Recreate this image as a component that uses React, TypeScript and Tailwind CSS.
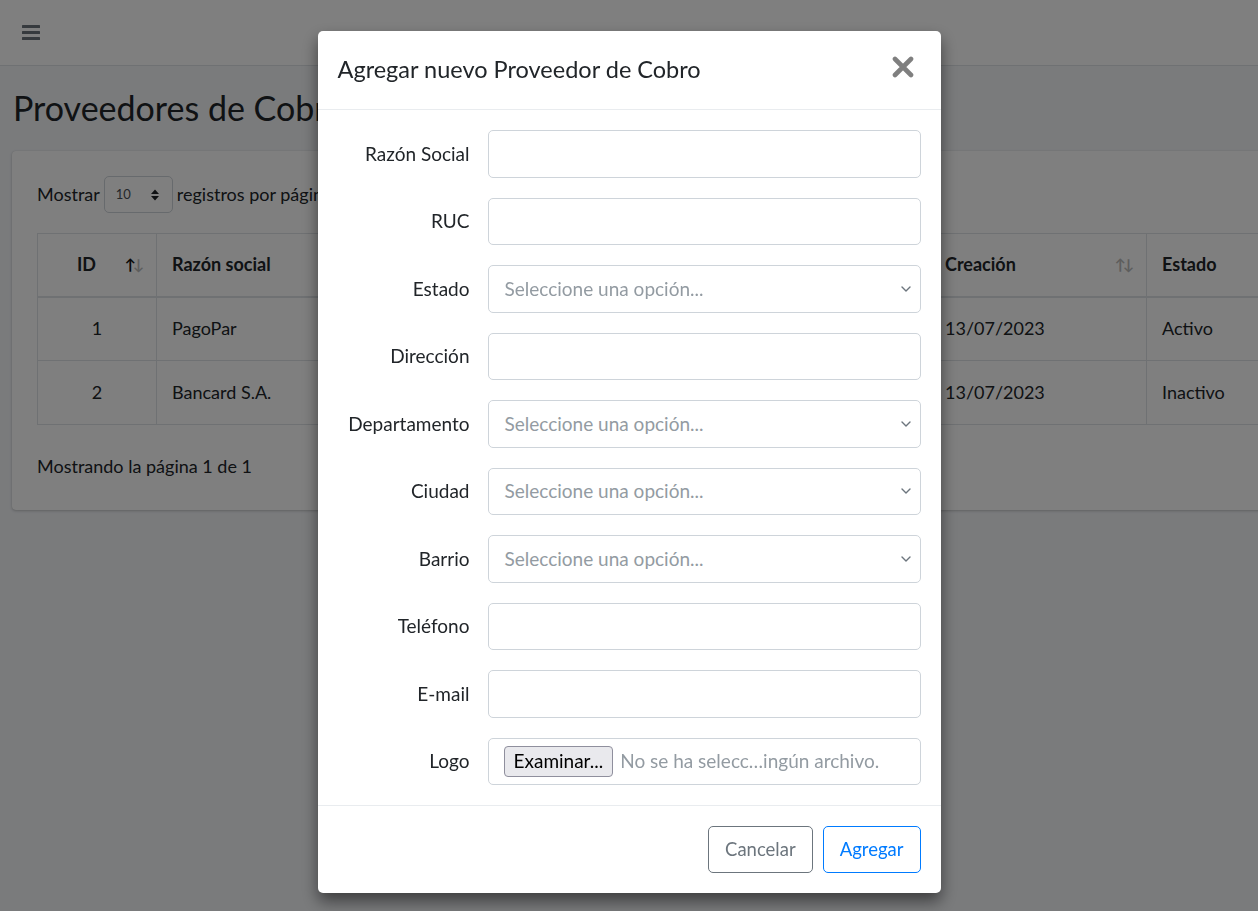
import React from "react";

const font = { fontFamily: "Lato, 'Noto Sans', sans-serif" };

type Field = { label: string; kind: "text" | "select" | "file" };

const fields: Field[] = [
  { label: "Razón Social", kind: "text" },
  { label: "RUC", kind: "text" },
  { label: "Estado", kind: "select" },
  { label: "Dirección", kind: "text" },
  { label: "Departamento", kind: "select" },
  { label: "Ciudad", kind: "select" },
  { label: "Barrio", kind: "select" },
  { label: "Teléfono", kind: "text" },
  { label: "E-mail", kind: "text" },
  { label: "Logo", kind: "file" },
];

const rows = [
  { id: 1, name: "PagoPar", date: "13/07/2023", status: "Activo" },
  { id: 2, name: "Bancard S.A.", date: "13/07/2023", status: "Inactivo" },
];

function Chevron() {
  return (
    <svg width="12" height="8" viewBox="0 0 12 8" className="absolute right-[8px] top-1/2 -translate-y-1/2">
      <path d="M2 2l4 4 4-4" fill="none" stroke="#6c757d" strokeWidth="1.4" strokeLinecap="round" strokeLinejoin="round" />
    </svg>
  );
}

function Control({ kind }: { kind: Field["kind"] }) {
  const base =
    "relative h-[47.5px] w-full rounded-[5px] border border-[#ced4da] bg-white flex items-center";
  if (kind === "select") {
    return (
      <div className={base}>
        <span className="pl-4 text-[19px] text-[#939ba2]">Seleccione una opción...</span>
        <Chevron />
      </div>
    );
  }
  if (kind === "file") {
    return (
      <div className={base + " pl-[15px]"}>
        <span className="h-[31px] px-[9px] flex items-center rounded-[4px] border border-[#8f8f9d] bg-[#e9e9ed] text-[19px] text-black">
          Examinar...
        </span>
        <span className="ml-[7px] text-[19px] text-[#939ba2]">No se ha selecc…ingún archivo.</span>
      </div>
    );
  }
  return <div className={base} />;
}

function SortIcon({ active }: { active?: boolean }) {
  return (
    <span className="text-[15px] font-bold tracking-[-3px] leading-none">
      <span className={active ? "text-[#111]" : "text-[#bbb]"}>↑</span>
      <span className="text-[#bbb]">↓</span>
    </span>
  );
}

function Page() {
  return (
    <div className="min-h-screen bg-[#f4f6f9]">
      <div className="h-[66px] bg-white border-b border-[#dee2e6] flex items-center pl-[22px]">
        <svg width="18" height="15" viewBox="0 0 18 15">
          <rect x="0" y="0" width="18" height="3" rx="0.5" fill="#6c757d" />
          <rect x="0" y="6" width="18" height="3" rx="0.5" fill="#6c757d" />
          <rect x="0" y="12" width="18" height="3" rx="0.5" fill="#6c757d" />
        </svg>
      </div>
      <h1 className="pl-[13px] pt-[18px] pb-[20px] text-[34px] leading-[47px] text-[#212529]">
        Proveedores de Cobro
      </h1>
      <div className="ml-[12px] w-[1400px] rounded-[4px] bg-white shadow-[0_0_1px_rgba(0,0,0,.125),0_1px_3px_rgba(0,0,0,.2)] px-[25px] pt-[25px] pb-[30px] text-[18px] text-[#212529]">
        <div className="flex items-center h-[37px]">
          <span>Mostrar</span>
          <span className="mx-[4px] w-[69px] h-[37px] rounded-[5px] border border-[#ced4da] flex items-center justify-between pl-[11px] pr-[12px] text-[13px] text-[#495057]">
            10
            <svg width="10" height="14" viewBox="0 0 10 14">
              <path d="M1 6L5 1.5 9 6z M1 8l4 4.5L9 8z" fill="#212529" />
            </svg>
          </span>
          <span>registros por página</span>
        </div>
        <table className="mt-[20px] border-collapse table-fixed w-[1350px]">
          <colgroup>
            <col className="w-[119px]" />
            <col className="w-[250px]" />
            <col className="w-[200px]" />
            <col className="w-[324px]" />
            <col className="w-[216px]" />
            <col />
          </colgroup>
          <thead>
            <tr className="h-[63px] font-bold">
              <th className="border border-[#dee2e6] border-b-2 px-[15px]">
                <div className="flex items-center justify-between pl-[24px]">
                  <span>ID</span>
                  <SortIcon active />
                </div>
              </th>
              <th className="border border-[#dee2e6] border-b-2 px-[15px] text-left">Razón social</th>
              <th className="border border-[#dee2e6] border-b-2 px-[15px] text-left">RUC</th>
              <th className="border border-[#dee2e6] border-b-2 px-[15px] text-left">Teléfono</th>
              <th className="border border-[#dee2e6] border-b-2 px-[15px] text-left">
                <div className="flex items-center justify-between -ml-[1px]">
                  <span>Creación</span>
                  <SortIcon />
                </div>
              </th>
              <th className="border border-[#dee2e6] border-b-2 px-[15px] text-left">Estado</th>
            </tr>
          </thead>
          <tbody>
            {rows.map((r) => (
              <tr key={r.id} className="h-[64px]">
                <td className="border border-[#dee2e6] text-center">{r.id}</td>
                <td className="border border-[#dee2e6] px-[15px]">{r.name}</td>
                <td className="border border-[#dee2e6] px-[15px]">80000000-1</td>
                <td className="border border-[#dee2e6] px-[15px]">021 000 000</td>
                <td className="border border-[#dee2e6] px-[14px]">{r.date}</td>
                <td className="border border-[#dee2e6] px-[15px]">{r.status}</td>
              </tr>
            ))}
          </tbody>
        </table>
        <div className="mt-[28px] leading-[27px]">Mostrando la página 1 de 1</div>
      </div>
    </div>
  );
}

function Modal() {
  return (
    <div className="fixed inset-0 bg-black/50">
      <div className="mx-auto mt-[31px] w-[623px] rounded-[5px] bg-white shadow-[0_8px_16px_rgba(0,0,0,0.5)]">
        <div className="h-[79px] flex items-center justify-between px-5 border-b border-[#e9ecef]">
          <h4 className="text-[23.5px] text-[#212529]">Agregar nuevo Proveedor de Cobro</h4>
          <svg width="22" height="22" viewBox="0 0 22 22" className="mr-[7px] -mt-[6px]">
            <path d="M3 3l16 16M19 3L3 19" stroke="#7f7f7f" strokeWidth="4.6" strokeLinecap="round" />
          </svg>
        </div>
        <div className="p-5 grid grid-cols-[132px_1fr] gap-x-[18px] gap-y-[20px]">
          {fields.map((f) => (
            <React.Fragment key={f.label}>
              <div className="flex items-center justify-end text-[19px] text-[#212529]">{f.label}</div>
              <Control kind={f.kind} />
            </React.Fragment>
          ))}
        </div>
        <div className="border-t border-[#e9ecef] p-5 flex justify-end gap-[10px]">
          <button className="h-[47px] px-4 rounded-[5px] border border-[#6c757d] text-[#6c757d] text-[18.5px]">
            Cancelar
          </button>
          <button className="h-[47px] px-4 rounded-[5px] border border-[#007bff] text-[#007bff] text-[18.5px]">
            Agregar
          </button>
        </div>
      </div>
    </div>
  );
}

export default function App() {
  return (
    <div style={font} className="relative w-screen h-screen overflow-hidden">
      <Page />
      <Modal />
    </div>
  );
}
